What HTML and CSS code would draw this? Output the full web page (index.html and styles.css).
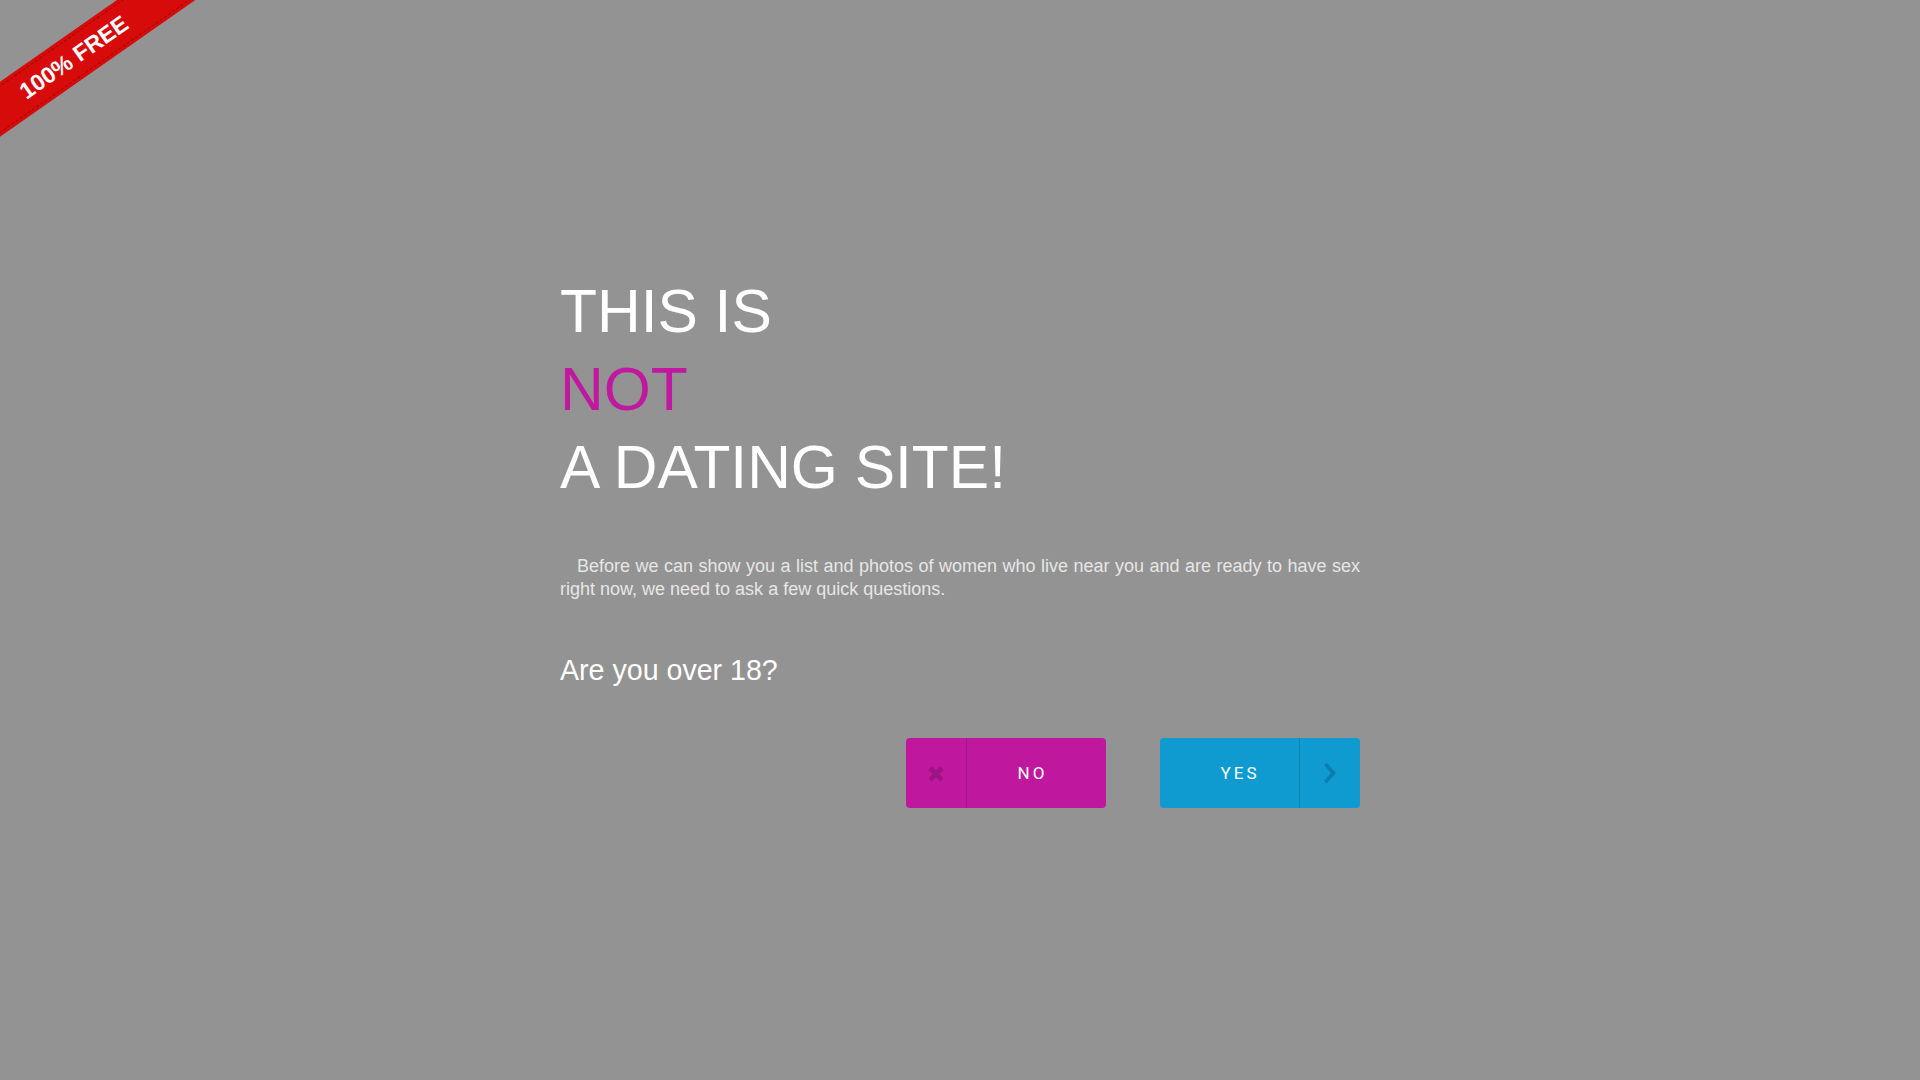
FILE: index.html
```html
<!DOCTYPE html>
<html lang="en">
<head>
<meta charset="utf-8">
<title>This is not a dating site</title>
<link rel="stylesheet" href="styles.css">
</head>
<body>
<div class="ribbon"><span class="ribbon-text">100% FREE</span></div>
<main class="page">
  <section class="content">
    <h1 class="title">THIS IS<br><span class="accent">NOT</span><br>A DATING SITE!</h1>
    <p class="intro">Before we can show you a list and photos of women who live near you and are ready to have sex right now, we need to ask a few quick questions.</p>
    <h2 class="question">Are you over 18?</h2>
    <div class="actions">
      <a class="btn btn-no" href="#">
        <span class="btn-icon btn-icon-left">
          <svg width="16" height="16" viewBox="0 0 16 16"><path d="M2 2 L14 14 M14 2 L2 14" stroke="#9d1483" stroke-width="4.6" fill="none"/></svg>
        </span>
        <span class="btn-label btn-label-no">NO</span>
      </a>
      <a class="btn btn-yes" href="#">
        <span class="btn-label btn-label-yes">YES</span>
        <span class="btn-icon btn-icon-right">
          <svg width="14" height="22" viewBox="0 0 14 22"><path d="M2.5 2 L10.5 11 L2.5 20" stroke="#0b7eab" stroke-width="3.6" fill="none"/></svg>
        </span>
      </a>
    </div>
  </section>
</main>
</body>
</html>
```

FILE: styles.css
```css
html, body {
  margin: 0;
  padding: 0;
}
body {
  background: #939393;
  font-family: "Liberation Sans", Arial, sans-serif;
  overflow: hidden;
  height: 100vh;
}
.page {
  height: 100vh;
  display: flex;
  align-items: center;
  justify-content: center;
}
.content {
  width: 800px;
}
.title {
  margin: 0;
  font-weight: normal;
  font-size: 60.5px;
  line-height: 78px;
  color: #ffffff;
}
.accent {
  color: #c0189f;
}
.intro {
  margin: 49px 0 0;
  font-size: 18px;
  line-height: 23.4px;
  color: #e6e6e6;
  text-align: justify;
  text-indent: 17px;
}
.question {
  margin: 51px 0 0;
  font-weight: normal;
  font-size: 28.6px;
  line-height: 36.4px;
  color: #ffffff;
}
.actions {
  margin-top: 49.6px;
  display: flex;
  justify-content: flex-end;
  gap: 54px;
}
.btn {
  width: 200px;
  height: 70px;
  border-radius: 4px;
  display: flex;
  align-items: stretch;
  text-decoration: none;
  color: #ffffff;
  font-family: Roboto, "Liberation Sans", sans-serif;
  font-size: 17px;
  letter-spacing: 3px;
  overflow: hidden;
}
.btn-no {
  background: #bf189f;
}
.btn-yes {
  background: #0f9bd0;
}
.btn-icon {
  width: 61px;
  flex: 0 0 61px;
  display: flex;
  align-items: center;
  justify-content: center;
  box-sizing: border-box;
}
.btn-icon-left {
  border-right: 1px solid #a2158a;
  padding-top: 1px;
}
.btn-icon-right {
  border-left: 1px solid #0c85b3;
}
.btn-label {
  flex: 1;
  display: flex;
  align-items: center;
  justify-content: center;
}
.btn-label-no {
  padding-right: 8px;
}
.btn-label-yes {
  padding-left: 21px;
}
.ribbon {
  position: absolute;
  left: -76px;
  top: 35px;
  width: 300px;
  height: 45px;
  background: #d80b0b;
  transform: rotate(-35deg);
  display: flex;
  align-items: center;
  justify-content: center;
  box-sizing: border-box;
}
.ribbon::before {
  content: "";
  position: absolute;
  left: 0;
  right: 0;
  top: 3px;
  bottom: 3px;
  border-top: 1px dashed rgba(90, 0, 0, 0.45);
  border-bottom: 1px dashed rgba(90, 0, 0, 0.45);
}
.ribbon-text {
  position: relative;
  color: #ffffff;
  font-weight: bold;
  font-size: 23px;
  margin-left: 0;
}
```
